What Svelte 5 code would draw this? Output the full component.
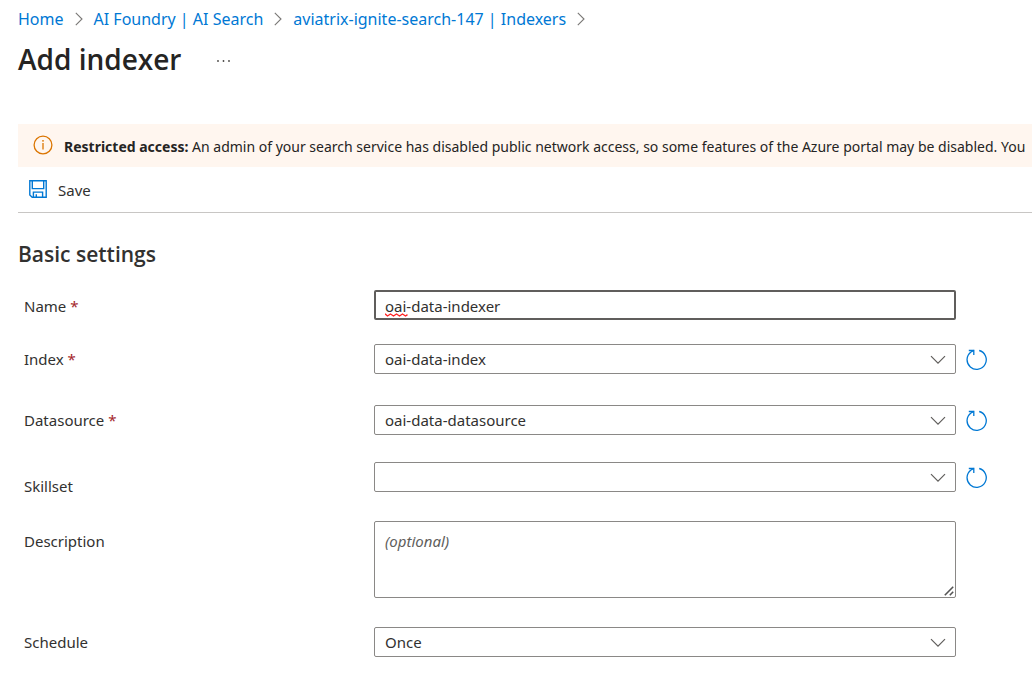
<script>
  let name = $state('oai-data-indexer');
  let description = $state('');

  const crumbs = ['Home', 'AI Foundry | AI Search', 'aviatrix-ignite-search-147 | Indexers'];

  const sources = [
    { id: 'index', label: 'Index', value: 'oai-data-index', required: true },
    { id: 'datasource', label: 'Datasource', value: 'oai-data-datasource', required: true },
    { id: 'skillset', label: 'Skillset', value: '', required: false }
  ];
</script>

{#snippet chevronDown()}
  <svg class="chevron" width="16" height="10" viewBox="0 0 16 10" aria-hidden="true">
    <path d="M1 1.2 8 8.2 15 1.2" fill="none" stroke="#605e5c" stroke-width="1.2" />
  </svg>
{/snippet}

<div class="page">
  <nav aria-label="Breadcrumb">
    {#each crumbs as crumb}
      <a href="#top">{crumb}</a>
      <svg width="8" height="14" viewBox="0 0 8 14" aria-hidden="true">
        <path d="M.8 .8 7 7 .8 13.2" fill="none" stroke="#7a7876" stroke-width="1.1" />
      </svg>
    {/each}
  </nav>

  <header>
    <h1>Add indexer</h1>
    <button class="more" aria-label="More">
      <svg width="16" height="4" viewBox="0 0 16 4" aria-hidden="true">
        <g fill="#484644">
          <circle cx="3" cy="2" r=".9" />
          <circle cx="8.5" cy="2" r=".9" />
          <circle cx="14" cy="2" r=".9" />
        </g>
      </svg>
    </button>
  </header>

  <div class="banner" role="status">
    <svg width="20" height="20" viewBox="0 0 20 20" aria-hidden="true">
      <circle cx="10" cy="10" r="8.9" fill="none" stroke="#db7500" stroke-width="1.3" />
      <path d="M10 8v6.4" stroke="#db7500" stroke-width="1.3" />
      <circle cx="10" cy="5.8" r=".9" fill="#db7500" />
    </svg>
    <p><strong>Restricted access:</strong> An admin of your search service has disabled public network access, so some features of the Azure portal may be disabled. You</p>
  </div>

  <div class="toolbar">
    <button class="save">
      <svg width="18" height="18" viewBox="0 0 18 18" aria-hidden="true">
        <g fill="none" stroke="#0078d4" stroke-width="1.4">
          <path d="M.8 .8H17.2V17.2H3.2L.8 14.9Z" />
          <path d="M3.3 .8V8.6H14.7V.8" />
          <path d="M4.4 17V12.1H13.6V17" />
          <path d="M7.3 17V14.2" />
        </g>
      </svg>
      <span>Save</span>
    </button>
  </div>

  <main>
    <h2>Basic settings</h2>
    <form>
      <div class="row name">
        <label for="name">Name <span class="req">*</span></label>
        <div class="field">
          <input id="name" type="text" bind:value={name} spellcheck="false" />
          <svg class="squiggle" width="23" height="4" viewBox="0 0 23 4" aria-hidden="true">
            <path d="M0 .8 2.5 3 5.5 1 8.5 3 11.5 1 14.5 3 17.5 1 20.5 3 22.5 1.6" fill="none" stroke="#ff2020" stroke-width="1.3" />
          </svg>
        </div>
      </div>

      {#each sources as s}
        <div class="row {s.id}">
          <label for={s.id}>{s.label}{#if s.required}&nbsp;<span class="req">*</span>{/if}</label>
          <div class="field">
            <select id={s.id}><option>{s.value}</option></select>
            {@render chevronDown()}
          </div>
          <button type="button" class="refresh" aria-label="Refresh">
            <svg width="22" height="22" viewBox="0 0 22 22" aria-hidden="true">
              <g fill="none" stroke="#0078d4" stroke-width="1.3">
                <path d="M13.2 1.5A9.6 9.6 0 1 1 5 3L7.8 1.4" />
                <path d="M2.8 1.5H7.8V6" />
              </g>
            </svg>
          </button>
        </div>
      {/each}

      <div class="row description">
        <label for="description">Description</label>
        <div class="field">
          <textarea id="description" placeholder="(optional)" bind:value={description}></textarea>
          <svg class="grip" width="10" height="10" viewBox="0 0 10 10" aria-hidden="true">
            <path d="M.8 9.2 9.2 .8M5.8 9.2 9.2 5.8" stroke="#555" stroke-width="1.6" />
          </svg>
        </div>
      </div>

      <div class="row">
        <label for="schedule">Schedule</label>
        <div class="field">
          <select id="schedule"><option>Once</option></select>
          {@render chevronDown()}
        </div>
      </div>
    </form>
  </main>
</div>

<style>
  :global(body) {
    margin: 0;
    background: #fff;
  }

  .page {
    padding: 8px 0 24px 18px;
    overflow: hidden;
    color: #323130;
    font: 15px/20px 'Segoe UI', 'Noto Sans', 'Open Sans', sans-serif;
  }

  button {
    padding: 0;
    border: 0;
    background: none;
    color: inherit;
    font: inherit;
    cursor: pointer;
  }

  svg {
    display: block;
    flex: none;
  }

  nav {
    display: flex;
    align-items: center;
    gap: 11px;
    font-size: 16px;
    line-height: 22px;
    white-space: nowrap;
  }

  nav a {
    color: #0078d4;
    text-decoration: none;
  }

  header {
    display: flex;
    align-items: center;
    gap: 34px;
    margin-top: 10px;
  }

  h1,
  h2 {
    font-family: 'Segoe UI', 'Open Sans', sans-serif;
    font-weight: 600;
  }

  h1 {
    margin: 0;
    color: #252423;
    font-size: 28px;
    line-height: 38px;
  }

  .more {
    padding-top: 4px;
  }

  .banner {
    display: flex;
    align-items: center;
    gap: 11px;
    height: 43px;
    margin-top: 46px;
    padding-left: 15px;
    background: #fff6ef;
    color: #252423;
    font-size: 14px;
  }

  .banner svg {
    margin-bottom: 2px;
  }

  .banner p {
    margin: 0;
    padding-top: 2px;
    white-space: nowrap;
  }

  .toolbar {
    display: flex;
    align-items: center;
    height: 45px;
    border-bottom: 1px solid #c8c6c4;
  }

  .save {
    display: flex;
    align-items: center;
    gap: 11px;
    padding: 0 11px 2px;
  }

  .save span {
    padding-top: 2px;
  }

  h2 {
    margin: 27px 0 22px;
    font-size: 21px;
    line-height: 28px;
  }

  .row {
    display: grid;
    grid-template-columns: 340px minmax(0, 1fr) 66px;
    column-gap: 10px;
    align-items: start;
    margin-bottom: 29px;
    padding-left: 6px;
  }

  .row.name {
    margin-bottom: 24px;
  }

  .row.index {
    margin-bottom: 31px;
  }

  .row.datasource {
    margin-bottom: 27px;
  }

  .row.skillset {
    margin-bottom: 25px;
  }

  label {
    padding-top: 5px;
  }

  .name label {
    padding-top: 6px;
  }

  .skillset label {
    padding-top: 14px;
  }

  .description label {
    padding-top: 10px;
  }

  .req {
    color: #a4262c;
  }

  .field {
    position: relative;
  }

  input,
  select,
  textarea {
    display: block;
    box-sizing: border-box;
    width: 100%;
    height: 30px;
    margin: 0;
    padding: 0 10px;
    border: 1px solid #8a8886;
    border-radius: 2px;
    outline: 0;
    background: #fff;
    color: #323130;
    font: inherit;
    appearance: none;
  }

  input {
    padding: 2px 9px 0;
    border: 2px solid #605e5c;
  }

  textarea {
    height: 77px;
    padding-top: 9px;
    resize: none;
  }

  textarea::placeholder {
    color: #605e5c;
    font-style: italic;
    opacity: 1;
  }

  .squiggle {
    position: absolute;
    top: 23px;
    left: 11px;
  }

  .chevron {
    position: absolute;
    top: 11px;
    right: 10px;
    pointer-events: none;
  }

  .grip {
    position: absolute;
    right: 2px;
    bottom: 2px;
    pointer-events: none;
  }

  .refresh {
    justify-self: start;
    padding-top: 5px;
  }
</style>
